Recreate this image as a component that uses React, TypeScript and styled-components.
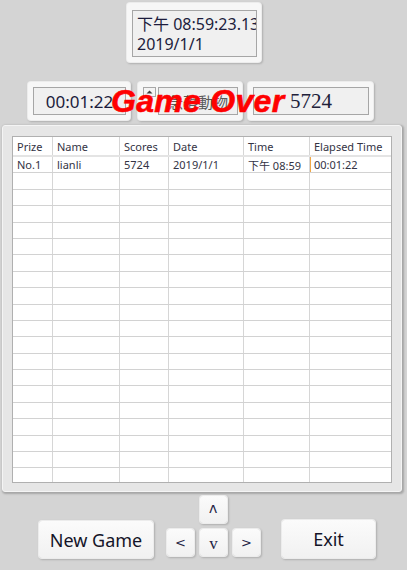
import React from 'react';
import styled, { createGlobalStyle, css } from 'styled-components';

const Global = createGlobalStyle`
  html, body { margin: 0; padding: 0; background: #d4d4d4; }
  body { font-family: "Noto Sans", "Noto Sans CJK TC", sans-serif; }
  * { box-sizing: border-box; }
`;

const raised = css`
  background: #f7f7f7;
  border-radius: 3px;
  box-shadow: 0 0 0 1px #ececec, 1px 1px 2px 1px rgba(0, 0, 0, 0.18);
`;

const Page = styled.div`
  width: 407px;
  height: 570px;
  overflow: hidden;
  background: #d4d4d4;
  display: flex;
  flex-direction: column;
`;

const TopRow = styled.div`
  display: flex;
  padding: 3px 0 0 127px;
`;

const ClockPanel = styled.div`
  ${raised};
  width: 134px;
  height: 59px;
  padding: 7px 4px 5px 5px;
  display: flex;
`;

const TextBox = styled.div<{ $align?: string }>`
  flex: 1;
  background: #f0f0f0;
  border: 1px solid #a6a6a6;
  overflow: hidden;
  white-space: nowrap;
  display: flex;
  flex-direction: column;
  justify-content: center;
  align-items: ${(p) => p.$align || 'center'};
`;

const ClockLine = styled.div`
  font-size: 16px;
  line-height: 20px;
  color: #1c1c3c;
  padding-left: 4px;
`;

const ControlRow = styled.div`
  position: relative;
  display: flex;
  margin-top: 20px;
  padding-left: 28px;
  height: 38px;
`;

const Panel = styled.div<{ $w: number; $ml?: number }>`
  ${raised};
  width: ${(p) => p.$w}px;
  height: 38px;
  margin-left: ${(p) => p.$ml || 0}px;
  padding: 5px 4px 5px 5px;
  display: flex;
  gap: 2px;
`;

const Spinner = styled.div`
  width: 13px;
  height: 10px;
  background: #f4f4f4;
  border: 1px solid #a8a8a8;
  display: flex;
  align-items: center;
  justify-content: center;
`;

const TimeText = styled.span`
  font-size: 17px;
  color: #1c1c3c;
`;

const HintText = styled.span`
  font-size: 15px;
  color: #5a5a5a;
`;

const ScoreText = styled.span`
  font-family: "Liberation Serif", "DejaVu Serif", serif;
  font-weight: normal;
  font-size: 21px;
  color: #20203a;
`;

const GameOver = styled.div`
  position: absolute;
  left: 111px;
  top: 3px;
  font-family: "Liberation Sans", Arial, sans-serif;
  font-weight: 900;
  font-style: italic;
  font-size: 32px;
  line-height: 32px;
  letter-spacing: 0.3px;
  color: #ff0000;
  -webkit-text-stroke: 0.6px #ff0000;
  white-space: nowrap;
  pointer-events: none;
`;

const TableFrame = styled.div`
  margin: 5px 0 0 2px;
  width: 400px;
  height: 367px;
  padding: 10px 9px 8px 9px;
  background: #e6e6e6;
  border-radius: 3px;
  border: 1px solid #f4f4f4;
  box-shadow: 1px 1px 2px 1px rgba(0, 0, 0, 0.22);
`;

const Grid = styled.div`
  width: 100%;
  height: 100%;
  background: #ffffff;
  border: 1px solid #b0b0b0;
  overflow: hidden;
  font-size: 11px;
  color: #333344;
`;

const cols = '40px 67px 49px 75px 66px 1fr';

const HeadRow = styled.div`
  display: grid;
  grid-template-columns: ${cols};
  height: 20px;
  border-bottom: 2px solid #e4e4e4;
`;

const BodyRow = styled.div`
  display: grid;
  grid-template-columns: ${cols};
  height: 16.4px;
  border-bottom: 1px solid #d2d2d2;
`;

const Cell = styled.div`
  position: relative;
  border-right: 1px solid #d6d6d6;
  padding-left: 4px;
  display: flex;
  align-items: center;
  white-space: nowrap;
  overflow: hidden;
  &:last-child { border-right: none; }
`;

const Caret = styled.span`
  position: absolute;
  left: 0;
  top: 0;
  bottom: 0;
  width: 1px;
  background: #f0a848;
`;

const BottomBar = styled.div`
  display: flex;
  align-items: flex-start;
  padding: 4px 0 0 39px;
`;

const Button = styled.button<{ $w: number; $h: number; $mt?: number; $ml?: number }>`
  ${raised};
  border: none;
  width: ${(p) => p.$w}px;
  height: ${(p) => p.$h}px;
  margin-top: ${(p) => p.$mt || 0}px;
  margin-left: ${(p) => p.$ml || 0}px;
  background: linear-gradient(#fbfbfb, #f1f1f1);
  font-family: "Noto Sans", sans-serif;
  font-size: 18px;
  color: #141428;
  padding: 0;
  display: flex;
  align-items: center;
  justify-content: center;
`;

const ArrowPad = styled.div`
  display: grid;
  grid-template-columns: 27px 27px 27px;
  grid-template-rows: 27px 27px;
  column-gap: 6px;
  row-gap: 6px;
  margin-left: 14px;
`;

const ArrowBtn = styled.button<{ $col: number; $row: number }>`
  ${raised};
  border: none;
  grid-column: ${(p) => p.$col};
  grid-row: ${(p) => p.$row};
  background: linear-gradient(#fbfbfb, #f1f1f1);
  font-family: "DejaVu Sans", sans-serif;
  font-size: 13px;
  color: #242444;
  padding: 0;
  display: flex;
  align-items: center;
  justify-content: center;
`;

const CaretGlyph = styled.span`
  font-family: "Liberation Sans", sans-serif;
  font-size: 22px;
  line-height: 1;
  transform: scaleX(0.75);
  margin-top: 7px;
`;

const SerifGlyph = styled.span`
  font-family: "Liberation Serif", serif;
  font-size: 17px;
  margin-top: 2px;
`;

const headers = ['Prize', 'Name', 'Scores', 'Date', 'Time', 'Elapsed Time'];
const firstRow = ['No.1', 'lianli', '5724', '2019/1/1', '下午 08:59', '00:01:22'];

export default function App() {
  const empty = Array.from({ length: 20 });
  return (
    <>
      <Global />
      <Page>
        <TopRow>
          <ClockPanel>
            <TextBox $align="flex-start">
              <ClockLine>下午 08:59:23.136</ClockLine>
              <ClockLine>2019/1/1</ClockLine>
            </TextBox>
          </ClockPanel>
        </TopRow>

        <ControlRow>
          <Panel $w={102}>
            <TextBox>
              <TimeText>00:01:22</TimeText>
            </TextBox>
          </Panel>
          <Panel $w={104} $ml={8}>
            <Spinner>
              <svg width="7" height="4" viewBox="0 0 7 4">
                <path d="M0.5 3.5 L3.5 0.5 L6.5 3.5 Z" fill="#404040" />
              </svg>
            </Spinner>
            <TextBox>
              <HintText>急落動物</HintText>
            </TextBox>
          </Panel>
          <Panel $w={125} $ml={6}>
            <TextBox>
              <ScoreText>5724</ScoreText>
            </TextBox>
          </Panel>
          <GameOver>Game Over</GameOver>
        </ControlRow>

        <TableFrame>
          <Grid>
            <HeadRow>
              {headers.map((h) => (
                <Cell key={h}>{h}</Cell>
              ))}
            </HeadRow>
            <BodyRow>
              {firstRow.map((v, i) => (
                <Cell key={i}>
                  {i === 5 && <Caret />}
                  {v}
                </Cell>
              ))}
            </BodyRow>
            {empty.map((_, r) => (
              <BodyRow key={r}>
                {headers.map((h) => (
                  <Cell key={h} />
                ))}
              </BodyRow>
            ))}
          </Grid>
        </TableFrame>

        <BottomBar>
          <Button $w={114} $h={37} $mt={25}>New Game</Button>
          <ArrowPad>
            <ArrowBtn $col={2} $row={1}>
              <CaretGlyph>^</CaretGlyph>
            </ArrowBtn>
            <ArrowBtn $col={1} $row={2}>&lt;</ArrowBtn>
            <ArrowBtn $col={2} $row={2}>
              <SerifGlyph>v</SerifGlyph>
            </ArrowBtn>
            <ArrowBtn $col={3} $row={2}>&gt;</ArrowBtn>
          </ArrowPad>
          <Button $w={93} $h={38} $mt={24} $ml={22}>Exit</Button>
        </BottomBar>
      </Page>
    </>
  );
}
